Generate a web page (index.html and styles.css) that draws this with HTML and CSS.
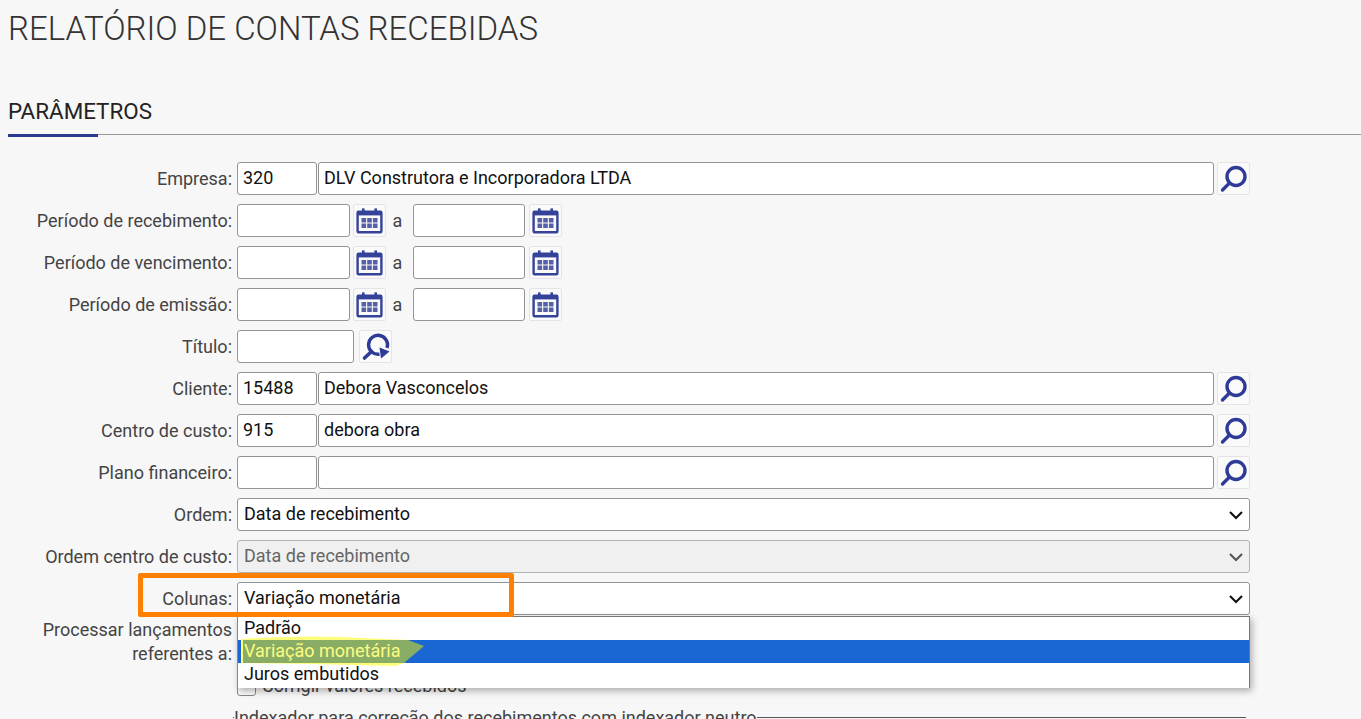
FILE: index.html
```html
<!DOCTYPE html>
<html lang="pt-BR">
<head>
<meta charset="utf-8">
<title>Relatório de contas recebidas</title>
<link rel="stylesheet" href="styles.css">
</head>
<body>
<svg class="defs" width="0" height="0" aria-hidden="true">
  <symbol id="i-search" viewBox="0 0 31 31">
    <circle cx="18" cy="13.5" r="9" fill="none" stroke="#2e3a97" stroke-width="3.4"/>
    <path d="M11.5 20 L4.5 27" fill="none" stroke="#2e3a97" stroke-width="3.4" stroke-linecap="round"/>
  </symbol>
  <symbol id="i-cal" viewBox="0 0 31 31">
    <rect x="3.6" y="6.8" width="23.8" height="20.4" rx="1" fill="none" stroke="#34429a" stroke-width="2.4"/>
    <rect x="3.6" y="6.8" width="23.8" height="3.6" fill="#34429a"/>
    <rect x="8" y="3.4" width="2.6" height="5" fill="#34429a"/>
    <rect x="20.4" y="3.4" width="2.6" height="5" fill="#34429a"/>
    <path d="M7.5 13h4.6v4.4H7.5zM13.2 13h4.6v4.4h-4.6zM18.9 13h4.6v4.4h-4.6zM7.5 18.6h4.6V23H7.5zM13.2 18.6h4.6V23h-4.6zM18.9 18.6h4.6V23h-4.6z" fill="#5560a8"/>
  </symbol>
  <symbol id="i-refresh" viewBox="0 0 31 31">
    <path d="M27 17 A9.5 9.5 0 1 0 19.5 23.2" fill="none" stroke="#2e3a97" stroke-width="3.4"/>
    <path d="M11.5 20.5 L4.5 27" fill="none" stroke="#2e3a97" stroke-width="3.6" stroke-linecap="round"/>
    <path d="M19.5 16.5 L29.5 20.5 L21 27.5 Z" fill="#2e3a97"/>
  </symbol>
  <symbol id="i-chev" viewBox="0 0 14 10">
    <path d="M1 2 L7 8 L13 2" fill="none" stroke="currentColor" stroke-width="2.1"/>
  </symbol>
</svg>

<h1 class="title">RELATÓRIO DE CONTAS RECEBIDAS</h1>
<h2 class="section"><span class="section-text">PARÂMETROS</span></h2>

<form class="form">
  <div class="row">
    <label class="lbl">Empresa:</label>
    <input class="inp code" value="320">
    <input class="inp grow" value="DLV Construtora e Incorporadora LTDA">
    <span class="btn"><svg class="ico"><use href="#i-search"/></svg></span>
  </div>
  <div class="row">
    <label class="lbl">Período de recebimento:</label>
    <input class="inp date"><span class="btn btn-cal"><svg class="ico"><use href="#i-cal"/></svg></span>
    <span class="sep">a</span>
    <input class="inp date date-end"><span class="btn btn-cal"><svg class="ico"><use href="#i-cal"/></svg></span>
  </div>
  <div class="row">
    <label class="lbl">Período de vencimento:</label>
    <input class="inp date"><span class="btn btn-cal"><svg class="ico"><use href="#i-cal"/></svg></span>
    <span class="sep">a</span>
    <input class="inp date date-end"><span class="btn btn-cal"><svg class="ico"><use href="#i-cal"/></svg></span>
  </div>
  <div class="row">
    <label class="lbl">Período de emissão:</label>
    <input class="inp date"><span class="btn btn-cal"><svg class="ico"><use href="#i-cal"/></svg></span>
    <span class="sep">a</span>
    <input class="inp date date-end"><span class="btn btn-cal"><svg class="ico"><use href="#i-cal"/></svg></span>
  </div>
  <div class="row">
    <label class="lbl">Título:</label>
    <input class="inp titulo"><span class="btn btn-ref"><svg class="ico"><use href="#i-refresh"/></svg></span>
  </div>
  <div class="row">
    <label class="lbl">Cliente:</label>
    <input class="inp code" value="15488">
    <input class="inp grow" value="Debora Vasconcelos">
    <span class="btn"><svg class="ico"><use href="#i-search"/></svg></span>
  </div>
  <div class="row">
    <label class="lbl">Centro de custo:</label>
    <input class="inp code" value="915">
    <input class="inp grow" value="debora obra">
    <span class="btn"><svg class="ico"><use href="#i-search"/></svg></span>
  </div>
  <div class="row">
    <label class="lbl">Plano financeiro:</label>
    <input class="inp code">
    <input class="inp grow">
    <span class="btn"><svg class="ico"><use href="#i-search"/></svg></span>
  </div>
  <div class="row">
    <label class="lbl">Ordem:</label>
    <div class="sel"><span class="sel-text">Data de recebimento</span><svg class="chev"><use href="#i-chev"/></svg></div>
  </div>
  <div class="row">
    <label class="lbl">Ordem centro de custo:</label>
    <div class="sel sel-off"><span class="sel-text">Data de recebimento</span><svg class="chev"><use href="#i-chev"/></svg></div>
  </div>
  <div class="row">
    <label class="lbl">Colunas:</label>
    <div class="sel sel-open">
      <span class="sel-text">Variação monetária</span><svg class="chev"><use href="#i-chev"/></svg>
      <ul class="menu">
        <li class="opt">Padrão</li>
        <li class="opt opt-on">
          <svg class="marker" viewBox="0 0 186 34" aria-hidden="true">
            <path d="M1 3 Q50 -0.5 100 1 L168 4 L164 27 L156 30 L70 28 L1 27 Z" fill="#fdfd7c"/>
            <path d="M3 4 L168 4 L184 10 L164 27 L3 27 Z" fill="#8aad66"/>
          </svg>
          <span class="opt-text">Variação monetária</span>
        </li>
        <li class="opt">Juros embutidos</li>
      </ul>
    </div>
    <span class="callout"></span>
  </div>
  <div class="row row-two">
    <label class="lbl">Processar lançamentos<br>referentes a:</label>
  </div>
  <div class="row row-check">
    <span class="check"></span><span class="check-text">Corrigir valores recebidos</span>
  </div>
  <fieldset class="group">
    <legend class="legend">Indexador para correção dos recebimentos com indexador neutro</legend>
  </fieldset>
</form>
</body>
</html>
```
FILE: styles.css
```css
* { box-sizing: border-box; }
html, body { height: 719px; overflow: hidden; }
body {
  margin: 0;
  padding: 0 8px;
  background: #f7f7f7;
  font-family: Roboto, "Liberation Sans", sans-serif;
  font-size: 18px;
  color: #444;
}
.defs { position: absolute; }
.title {
  margin: 0;
  padding-top: 10px;
  height: 96px;
  font-size: 33px;
  line-height: 38px;
  font-weight: 300;
  color: #333;
}
.section {
  margin: 0 -8px 0 0;
  height: 39px;
  border-bottom: 1px solid #999;
  font-size: 22.4px;
  font-weight: 400;
  line-height: 30px;
  color: #222;
}
.section-text { display: inline-block; height: 41px; width: 90px; white-space: nowrap; border-bottom: 3px solid #2b3990; }
.form { margin: 0; padding-top: 27px; width: 1242px; }
.row { display: flex; align-items: center; height: 33px; margin-bottom: 9px; position: relative; }
.lbl { width: 229px; padding-right: 5px; flex: none; text-align: right; line-height: 24px; color: #444; white-space: nowrap; }
.inp {
  height: 33px;
  border: 1px solid #949494;
  border-radius: 3px;
  background: #fff;
  padding: 0 5px 2px 5px;
  font: 400 18px Roboto, "Liberation Sans", sans-serif;
  color: #111;
  flex: none;
}
.code { width: 80px; margin-right: 1px; }
.grow { flex: 1 1 0; min-width: 0; }
.date { width: 113px; }
.date-end { width: 112px; }
.titulo { width: 117px; }
.btn {
  flex: none;
  width: 33px;
  height: 33px;
  margin-left: 3px;
  background: #fafafa;
  border: 1px solid #e4e4e4;
  border-radius: 2px;
  display: flex;
  align-items: center;
  justify-content: center;
}
.btn-ref { margin-left: 5px; }
.date-end + .btn { margin-left: 4px; }
.ico { width: 31px; height: 31px; display: block; }
.sep { width: 27px; padding-right: 4px; text-align: center; flex: none; color: #444; }
.sel {
  flex: 1 1 0;
  height: 33px;
  border: 1px solid #949494;
  border-radius: 3px;
  background: #fff;
  color: #111;
  padding: 0 6px;
  display: flex;
  align-items: center;
  justify-content: space-between;
  position: relative;
}
.sel-text { line-height: 24px; margin-top: -2px; }
.sel-off { background: #f0f0f0; border-color: #b4b4b4; color: #666; }
.chev { width: 14px; height: 10px; color: #111; flex: none; }
.sel-off .chev { color: #555; }
.menu {
  position: absolute;
  z-index: 5;
  top: 33px;
  left: -1px;
  right: -1px;
  margin: 0;
  padding: 0;
  list-style: none;
  background: #fff;
  border: 1px solid #767676;
  border-bottom: 0;
  border-left-color: #888;
  box-shadow: 2px 3px 7px rgba(0,0,0,.3);
  height: 72px;
}
.opt { height: 23px; line-height: 22px; padding-left: 6px; color: #111; position: relative; }
.opt-on { background: #1a66d2; color: #fcfc80; }
.marker { position: absolute; left: 2px; top: -4px; width: 186px; height: 34px; }
.opt-text { position: relative; }
.callout {
  position: absolute;
  z-index: 6;
  left: 130px;
  top: -9px;
  width: 376px;
  height: 44px;
  border: 5px solid #ff8000;
  border-radius: 2px;
}
.row-two { height: 48px; margin-top: -6px; margin-bottom: 0; align-items: flex-start; }
.row-check { height: 20px; margin: 10px 0 0 229px; }
.check { width: 19px; height: 19px; border: 1px solid #8a8a8a; border-radius: 3px; background: #fbfbfb; flex: none; }
.check-text { margin-left: 6px; line-height: 20px; }
.group {
  margin: 11px 0 0 225px;
  padding: 0 0 0 1px;
  border: 0;
  border-top: 1px solid #555;
  height: 20px;
  min-width: 0;
  width: 1013px;
}
.legend { padding: 0; color: #444; line-height: 21px; }
```
